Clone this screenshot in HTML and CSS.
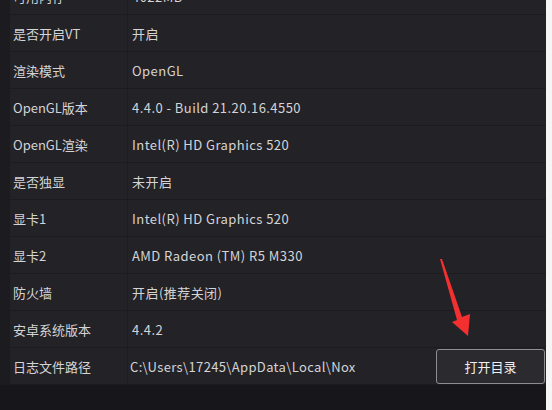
FILE: index.html
```html
<!DOCTYPE html>
<html lang="zh-CN">
<head>
<meta charset="utf-8">
<link rel="stylesheet" href="styles.css">
</head>
<body>
<div class="panel">
  <div class="list">
    <div class="row"><div class="label">可用内存</div><div class="value">4022MB</div></div>
    <div class="row"><div class="label">是否开启VT</div><div class="value">开启</div></div>
    <div class="row"><div class="label">渲染模式</div><div class="value">OpenGL</div></div>
    <div class="row"><div class="label">OpenGL版本</div><div class="value">4.4.0 - Build 21.20.16.4550</div></div>
    <div class="row"><div class="label">OpenGL渲染</div><div class="value">Intel(R) HD Graphics 520</div></div>
    <div class="row"><div class="label">是否独显</div><div class="value">未开启</div></div>
    <div class="row"><div class="label">显卡1</div><div class="value">Intel(R) HD Graphics 520</div></div>
    <div class="row"><div class="label">显卡2</div><div class="value">AMD Radeon (TM) R5 M330</div></div>
    <div class="row"><div class="label">防火墙</div><div class="value">开启(推荐关闭)</div></div>
    <div class="row"><div class="label">安卓系统版本</div><div class="value">4.4.2</div></div>
    <div class="row"><div class="label">日志文件路径</div><div class="value path">C:\Users\17245\AppData\Local\Nox</div><button class="btn">打开目录</button></div>
  </div>
  <div class="footer"></div>
  <svg class="arrow" width="552" height="410" viewBox="0 0 552 410">
    <polygon points="440,259 442,259 462,317 470,314 468,336 452,322 457,320" fill="#f3302f"/>
  </svg>
</div>
</body>
</html>
```
FILE: styles.css
```css
html, body {
  margin: 0;
  padding: 0;
  background: #f5f5f5;
  width: 552px;
  height: 410px;
  overflow: hidden;
}
.panel {
  width: 546px;
  height: 410px;
  background: #1c1b20;
  overflow: hidden;
  display: flex;
  flex-direction: column;
  font-family: "Noto Sans CJK SC", "Noto Sans", sans-serif;
  font-size: 13px;
  color: #d4d4d6;
}
.list {
  margin-top: -22px;
  padding-left: 10px;
}
.row {
  display: flex;
  align-items: center;
  height: 36px;
  border-bottom: 1px solid #1c1b20;
  background: #232227;
}
.label {
  width: 118px;
  height: 100%;
  display: flex;
  align-items: center;
  padding-left: 3px;
  box-sizing: border-box;
  border-right: 1px solid #1e1d22;
}
.value {
  flex: 1;
  padding-left: 4px;
  letter-spacing: 0.45px;
}
.path {
  padding-left: 2px;
  letter-spacing: 0.35px;
}
.btn {
  width: 109px;
  height: 35px;
  margin-right: 1px;
  margin-top: 1px;
  background: #2b2a2f;
  border: 1px solid #8e8d92;
  border-radius: 3px;
  color: #f0f0f0;
  font-family: "Noto Sans CJK SC", sans-serif;
  font-size: 13px;
}
.footer {
  flex: 1;
  background: #17161b;
}
.arrow {
  position: absolute;
  left: 0;
  top: 0;
}
```
